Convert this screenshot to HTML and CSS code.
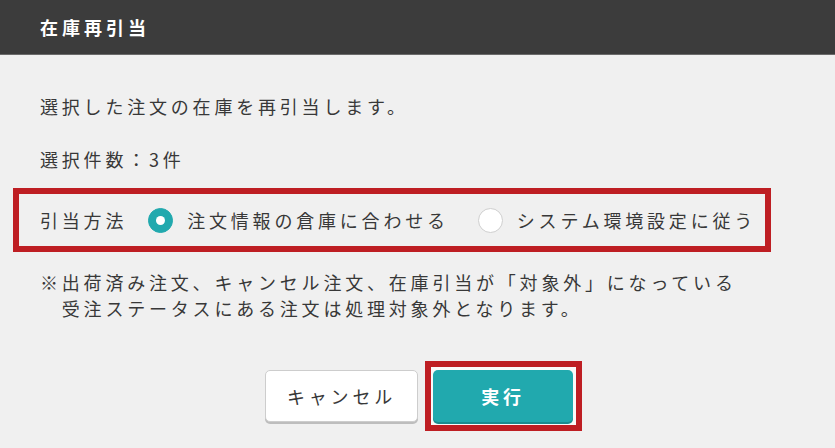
FILE: index.html
```html
<!DOCTYPE html>
<html lang="ja">
<head>
<meta charset="utf-8">
<title>在庫再引当</title>
<link rel="stylesheet" href="styles.css">
</head>
<body>
<div class="dialog">
  <header class="dialog-header">
    <h1 class="dialog-title">在庫再引当</h1>
  </header>
  <main class="dialog-body">
    <p class="lead">選択した注文の在庫を再引当します。</p>
    <p class="count">選択件数：3件</p>
    <div class="method highlight">
      <span class="method-label">引当方法</span>
      <label class="radio">
        <span class="radio-dot checked"></span>
        <span class="radio-text">注文情報の倉庫に合わせる</span>
      </label>
      <label class="radio">
        <span class="radio-dot"></span>
        <span class="radio-text">システム環境設定に従う</span>
      </label>
    </div>
    <p class="note">※出荷済み注文、キャンセル注文、在庫引当が「対象外」になっている<br>受注ステータスにある注文は処理対象外となります。</p>
    <div class="actions">
      <button class="btn btn-cancel" type="button">キャンセル</button>
      <span class="btn-highlight">
        <button class="btn btn-primary" type="button">実行</button>
      </span>
    </div>
  </main>
</div>
</body>
</html>
```
FILE: styles.css
```css
* { box-sizing: border-box; }
html, body {
  margin: 0;
  padding: 0;
  background: #f0f0f0;
}
body {
  font-family: "Noto Sans CJK JP", "Noto Sans", sans-serif;
  color: #383838;
  font-size: 18px;
  letter-spacing: 3.8px;
}
.dialog-header {
  height: 55px;
  background: #3c3c3c;
  border-bottom: 1px solid #6a6a6a;
  display: flex;
  align-items: center;
  padding-left: 40px;
}
.dialog-title {
  margin: 0;
  font-size: 18px;
  font-weight: 700;
  color: #ffffff;
  letter-spacing: 4px;
  line-height: 1;
}
.dialog-body {
  padding-top: 38px;
}
.lead, .count {
  margin: 0;
  padding-left: 40px;
  line-height: 27px;
  white-space: nowrap;
}
.count {
  margin-top: 26px;
}
.method {
  margin: 15px 0 0 13px;
  width: 758px;
  height: 64px;
  border: 6px solid #be1e23;
  display: flex;
  align-items: center;
  padding-left: 21px;
  white-space: nowrap;
}
.method-label {
  flex: none;
  margin-right: 21px;
}
.radio {
  flex: none;
  display: inline-flex;
  align-items: center;
  margin-right: 29px;
}
.radio-dot {
  width: 25px;
  height: 25px;
  border-radius: 50%;
  background: #ffffff;
  border: 1px solid #cfcfcf;
  margin-right: 14px;
  flex: none;
  display: flex;
  align-items: center;
  justify-content: center;
}
.radio-dot.checked {
  background: #21a9ae;
  border-color: #21a9ae;
}
.radio-dot.checked::after {
  content: "";
  width: 9px;
  height: 9px;
  border-radius: 50%;
  background: #ffffff;
}
.radio-text {
  flex: none;
}
.note {
  margin: 17px 0 0 40px;
  padding-left: 21.8px;
  text-indent: -21.8px;
  line-height: 26px;
  white-space: nowrap;
}
.actions {
  margin-top: 40px;
  display: flex;
  justify-content: center;
  align-items: center;
  gap: 7px;
  padding-left: 12px;
}
.btn {
  font-family: inherit;
  font-size: 18px;
  letter-spacing: 3.8px;
  border-radius: 5px;
  cursor: pointer;
  padding: 0;
}
.btn-cancel {
  width: 153px;
  height: 52px;
  background: #ffffff;
  color: #383838;
  border: 1px solid #cdcdcd;
  box-shadow: 0 2px 0 #bdbdbd;
}
.btn-highlight {
  display: inline-flex;
  border: 6px solid #be1e23;
  padding: 3px 3px 3px 2px;
  background: #fafafa;
}
.btn-primary {
  width: 140px;
  height: 52px;
  background: #21a9ae;
  color: #ffffff;
  font-weight: 700;
  border: none;
  box-shadow: 0 2px 0 #1a8c90;
}
```
